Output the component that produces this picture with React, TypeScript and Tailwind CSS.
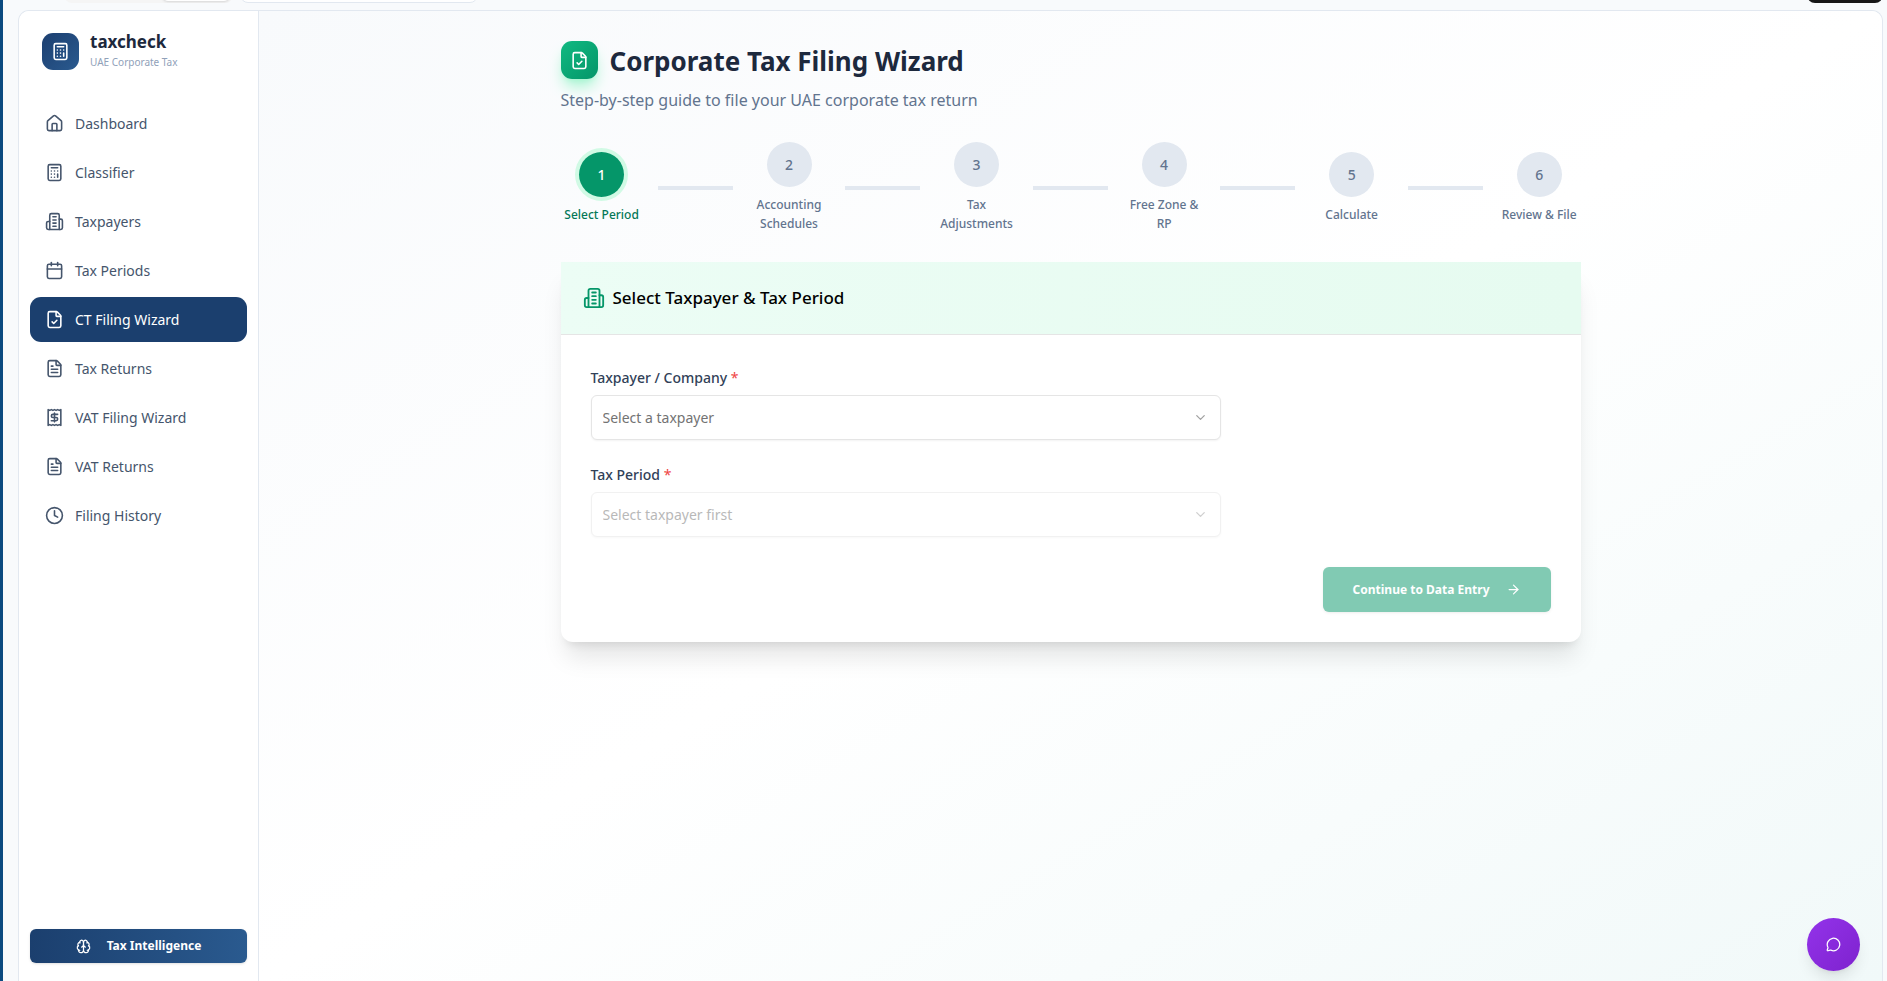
import { ArrowRight, Brain, Calculator, Calendar, ChevronDown, Clock, FileCheck, FileText, MessageCircle } from "lucide-react"
import type { ComponentType, ReactNode } from "react"

type IconType = ComponentType<{ className?: string; strokeWidth?: number }>

function House({ className }: { className?: string }) {
  return (
    <svg className={className} viewBox="0 0 24 24" fill="none" stroke="currentColor" strokeWidth={2} strokeLinecap="round" strokeLinejoin="round">
      <path d="M15 21v-8a1 1 0 0 0-1-1h-4a1 1 0 0 0-1 1v8" />
      <path d="M3 10a2 2 0 0 1 .709-1.528l7-6a2 2 0 0 1 2.582 0l7 6A2 2 0 0 1 21 10v9a2 2 0 0 1-2 2H5a2 2 0 0 1-2-2z" />
    </svg>
  )
}

function Building({ className }: { className?: string }) {
  return (
    <svg className={className} viewBox="0 0 24 24" fill="none" stroke="currentColor" strokeWidth={2} strokeLinecap="round" strokeLinejoin="round">
      <path d="M6 22V4a2 2 0 0 1 2-2h8a2 2 0 0 1 2 2v18Z" />
      <path d="M6 12H4a2 2 0 0 0-2 2v6a2 2 0 0 0 2 2h2" />
      <path d="M18 9h2a2 2 0 0 1 2 2v9a2 2 0 0 1-2 2h-2" />
      <path d="M10 6h4M10 10h4M10 14h4M10 18h4" />
    </svg>
  )
}

function ReceiptDollar({ className }: { className?: string }) {
  return (
    <svg className={className} viewBox="0 0 24 24" fill="none" stroke="currentColor" strokeWidth={2} strokeLinecap="round" strokeLinejoin="round">
      <path d="M4 2v20l2-1 2 1 2-1 2 1 2-1 2 1 2-1 2 1V2l-2 1-2-1-2 1-2-1-2 1-2-1-2 1Z" />
      <path d="M16 8h-6a2 2 0 1 0 0 4h4a2 2 0 1 1 0 4H8" />
      <path d="M12 17.5v-11" />
    </svg>
  )
}

const navItems: { label: string; icon: IconType; active?: boolean }[] = [
  { label: "Dashboard", icon: House },
  { label: "Classifier", icon: Calculator },
  { label: "Taxpayers", icon: Building },
  { label: "Tax Periods", icon: Calendar },
  { label: "CT Filing Wizard", icon: FileCheck, active: true },
  { label: "Tax Returns", icon: FileText },
  { label: "VAT Filing Wizard", icon: ReceiptDollar },
  { label: "VAT Returns", icon: FileText },
  { label: "Filing History", icon: Clock },
]

const steps = ["Select Period", "Accounting Schedules", "Tax Adjustments", "Free Zone & RP", "Calculate", "Review & File"]

export default function App() {
  return (
    <div className="flex h-screen flex-col overflow-hidden border-l-[3px] border-[#0b4a80] bg-[#f8fafc] pr-[4px] pl-[15px] font-['Noto_Sans','Open_Sans',sans-serif] text-[14px] text-slate-800">
      <TopBar />
      <div className="mt-[7px] flex min-h-0 flex-1 overflow-hidden rounded-t-[11px] border border-b-0 border-slate-200 bg-white">
        <Sidebar />
        <main className="min-w-0 flex-1 overflow-hidden bg-gradient-to-br from-[#f8fafc] via-white to-[#f1f9f9] px-[30px] pt-[30px]">
          <div className="mx-auto max-w-[1020px]">
            <header>
              <div className="flex items-center gap-3">
                <div className="flex h-[38px] w-[37px] items-center justify-center rounded-[11px] bg-gradient-to-br from-[#10b981] to-[#059669] text-white shadow-lg shadow-emerald-200">
                  <FileCheck className="size-[19px]" />
                </div>
                <h1 className="pt-[2px] text-[26px] leading-[36px] font-bold">Corporate Tax Filing Wizard</h1>
              </div>
              <p className="mt-2 text-[16px] leading-[26px] text-slate-500">Step-by-step guide to file your UAE corporate tax return</p>
            </header>
            <Stepper />
            <PeriodCard />
          </div>
        </main>
      </div>
      <button
        aria-label="Open chat"
        className="fixed right-[27px] bottom-[10px] flex size-[53px] items-center justify-center rounded-full bg-gradient-to-br from-[#9333ea] to-[#7e22ce] text-white shadow-lg"
      >
        <MessageCircle className="size-[15px]" />
      </button>
    </div>
  )
}

function TopBar() {
  return (
    <div className="flex h-[3px] shrink-0 items-end overflow-hidden pl-[46px]">
      <div className="flex h-9 w-[169px] items-end justify-end rounded-lg bg-neutral-100 px-[3px] pb-[2px]">
        <div className="h-8 w-[68px] rounded-md bg-white shadow-sm" />
      </div>
      <div className="ml-[7px] h-9 w-[238px] rounded-lg border border-slate-200 bg-white" />
      <div className="ml-auto h-9 w-[76px] rounded-lg bg-neutral-900" />
    </div>
  )
}

function Sidebar() {
  return (
    <aside className="flex w-[240px] shrink-0 flex-col border-r border-slate-200 bg-white">
      <div className="flex items-center gap-[11px] px-[23px] pt-5">
        <div className="flex size-[37px] items-center justify-center rounded-[11px] bg-gradient-to-br from-[#1c3f70] to-[#2a5a8f] text-white">
          <Calculator className="size-[19px]" />
        </div>
        <div>
          <div className="text-[17px] leading-[22px] font-bold">taxcheck</div>
          <div className="text-[10px] leading-[18px] text-slate-400">UAE Corporate Tax</div>
        </div>
      </div>
      <nav className="mt-[30px] flex flex-col gap-1 px-[11px]">
        {navItems.map(({ label, icon: Icon, active }) => (
          <a
            key={label}
            href="#"
            className={`flex h-[45px] items-center gap-[11px] rounded-[11px] px-[15px] ${active ? "bg-[#1b3f6e] text-white" : "text-slate-600"}`}
          >
            <Icon className="size-[19px] shrink-0" />
            {label}
          </a>
        ))}
      </nav>
      <div className="mt-auto px-[11px] pb-[18px]">
        <button className="flex h-[34px] w-full items-center justify-center gap-4 rounded-md bg-gradient-to-r from-[#1b3f6e] to-[#2a5a8f] text-[12px] font-bold text-white shadow-sm">
          <Brain className="size-[15px]" />
          Tax Intelligence
        </button>
      </div>
    </aside>
  )
}

function Stepper() {
  return (
    <ol className="mt-[29px] flex items-center">
      {steps.map((label, i) => (
        <li key={label} className={`flex items-center ${i > 0 ? "flex-[187]" : "flex-[82]"}`}>
          {i > 0 && <div className="mx-[15px] h-1 w-[75px] shrink-0 bg-slate-200" />}
          <div className={`flex min-w-0 flex-1 flex-col items-center gap-2 text-center ${i === 0 ? "text-[#047857]" : "text-slate-500"}`}>
            <div
              className={`flex size-[45px] items-center justify-center rounded-full text-[14px] font-medium ${
                i === 0 ? "bg-[#059669] text-white ring-4 ring-[#d1fae5]" : "bg-slate-200"
              }`}
            >
              {i + 1}
            </div>
            <span className="text-[12px] leading-[19px] font-medium">{label}</span>
          </div>
        </li>
      ))}
    </ol>
  )
}

function PeriodCard() {
  return (
    <section className="mt-[29px] rounded-xl bg-white shadow-xl">
      <div className="flex items-center gap-2 border-b border-neutral-200 bg-gradient-to-r from-[#ecfdf5] to-[#e6fbf0] px-[22px] py-[22px]">
        <Building className="size-[22px] text-[#059669]" />
        <h2 className="text-[17px] leading-[28px] font-medium text-black">Select Taxpayer &amp; Tax Period</h2>
      </div>
      <form className="p-[30px]">
        <div className="flex max-w-[630px] flex-col gap-[22px]">
          <Field id="taxpayer" label="Taxpayer / Company">
            <option>Select a taxpayer</option>
          </Field>
          <Field id="period" label="Tax Period" disabled>
            <option>Select taxpayer first</option>
          </Field>
        </div>
        <div className="mt-[30px] flex justify-end">
          <button
            type="button"
            disabled
            className="flex h-[45px] items-center gap-4 rounded-md bg-[#059669] px-[30px] text-[12px] font-bold text-white opacity-50 shadow-sm"
          >
            Continue to Data Entry
            <ArrowRight className="size-[15px]" />
          </button>
        </div>
      </form>
    </section>
  )
}

interface FieldProps {
  id: string
  label: string
  disabled?: boolean
  children: ReactNode
}

function Field({ id, label, disabled, children }: FieldProps) {
  return (
    <div>
      <label htmlFor={id} className="block pt-0.5 text-[14px] leading-[22px] font-medium text-slate-700">
        {label} <span className="font-normal text-[#ef4444]">*</span>
      </label>
      <div className={`relative mt-1.5 ${disabled ? "opacity-50" : ""}`}>
        <select
          id={id}
          disabled={disabled}
          className="h-[45px] w-full appearance-none rounded-md border border-neutral-200 bg-white px-[11px] text-[14px] text-neutral-500 opacity-100 shadow-xs"
        >
          {children}
        </select>
        <ChevronDown className="pointer-events-none absolute top-[15px] right-[13px] size-[15px] text-neutral-400" />
      </div>
    </div>
  )
}
